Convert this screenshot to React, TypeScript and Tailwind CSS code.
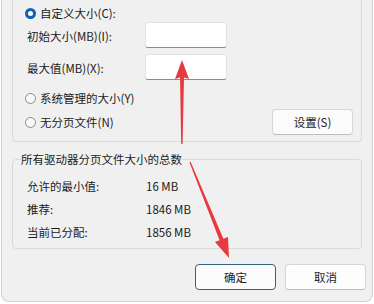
const font = "font-['Noto_Sans_CJK_SC','Noto_Sans',sans-serif]";

function Radio({ checked, label }: { checked?: boolean; label: string }) {
  return (
    <div className="flex items-center gap-[4px] pl-[12px]">
      {checked ? (
        <span className="w-[11px] h-[11px] rounded-full border-[3px] border-[#0f62b0] bg-white" />
      ) : (
        <span className="w-[11px] h-[11px] rounded-full border border-[#8c8c8c] bg-[#f7f7f7]" />
      )}
      <span>{label}</span>
    </div>
  );
}

function TextBox() {
  return (
    <div className="w-[82px] h-[26px] bg-white border border-[#e2e2e2] border-b-[#8d8d8d] rounded-[3px]" />
  );
}

function Button({ label, primary }: { label: string; primary?: boolean }) {
  return (
    <button
      className={
        primary
          ? 'w-[81px] h-[26px] rounded-[4px] border border-[#35637f] bg-[#fbfbfb] text-[#1b1b1b]'
          : 'w-[81px] h-[26px] rounded-[4px] border border-[#d6d6d6] border-b-[#bdbdbd] bg-[#fdfdfd] text-[#1b1b1b]'
      }
    >
      {label}
    </button>
  );
}

export default function App() {
  return (
    <div className={`relative w-[374px] h-[304px] bg-white overflow-hidden text-[11.5px] leading-[14px] text-[#1b1b1b] ${font}`}>
      {/* Dialog */}
      <div className="ml-[1px] w-[372px] h-[302px] bg-[#f0f0f0] border-x border-b border-[#cfcfcf] rounded-b-[8px] flex flex-col">
        {/* Custom size group (top cut off) */}
        <div className="ml-[10px] w-[350px] h-[142px] border-x border-b border-[#dadada] rounded-b-[4px] flex flex-col">
          <div className="h-[22px] pt-[6px]">
            <Radio checked label="自定义大小(C):" />
          </div>
          <div className="h-[26px] flex items-center pl-[14px]">
            <span className="w-[118px] pt-[2px]">初始大小(MB)(I):</span>
            <TextBox />
          </div>
          <div className="mt-[6px] h-[26px] flex items-center pl-[14px]">
            <span className="w-[118px] pt-[2px]">最大值(MB)(X):</span>
            <TextBox />
          </div>
          <div className="mt-[8px] h-[20px] flex items-center">
            <Radio label="系统管理的大小(Y)" />
          </div>
          <div className="mt-[1px] h-[26px] flex items-center justify-between pr-[8px]">
            <Radio label="无分页文件(N)" />
            <button className="w-[81px] h-[26px] rounded-[4px] border border-[#d6d6d6] border-b-[#bdbdbd] bg-[#fbfbfb]">
              设置(S)
            </button>
          </div>
        </div>

        {/* Totals group */}
        <fieldset className="ml-[10px] mt-[10px] w-[350px] border border-[#dadada] rounded-[4px] px-[8px] pb-[5px]">
          <legend className="px-0">所有驱动器分页文件大小的总数</legend>
          <div className="pl-[6px] pt-[8px]">
            <div className="h-[23px] flex items-center">
              <span className="w-[119px]">允许的最小值:</span>
              <span>16 MB</span>
            </div>
            <div className="h-[23px] flex items-center">
              <span className="w-[119px]">推荐:</span>
              <span>1846 MB</span>
            </div>
            <div className="h-[23px] flex items-center">
              <span className="w-[119px]">当前已分配:</span>
              <span>1856 MB</span>
            </div>
          </div>
        </fieldset>

        <div className="mt-[15px] flex justify-end gap-[9px] pr-[6px]">
          <Button primary label="确定" />
          <Button label="取消" />
        </div>
      </div>

      {/* Red annotation arrows */}
      <svg className="absolute inset-0 pointer-events-none" width="374" height="304" viewBox="0 0 374 304">
        <polygon
          fill="#e63a3e"
          points="182,60 189,79 184,77.5 182.6,144 181.2,144 180,77.5 175,79"
        />
        <polygon
          fill="#e63a3e"
          points="229,258 228,236.9 223.4,238.7 190.6,161.8 189.4,162.2 219.6,240.3 215,242.1"
        />
      </svg>
    </div>
  );
}
